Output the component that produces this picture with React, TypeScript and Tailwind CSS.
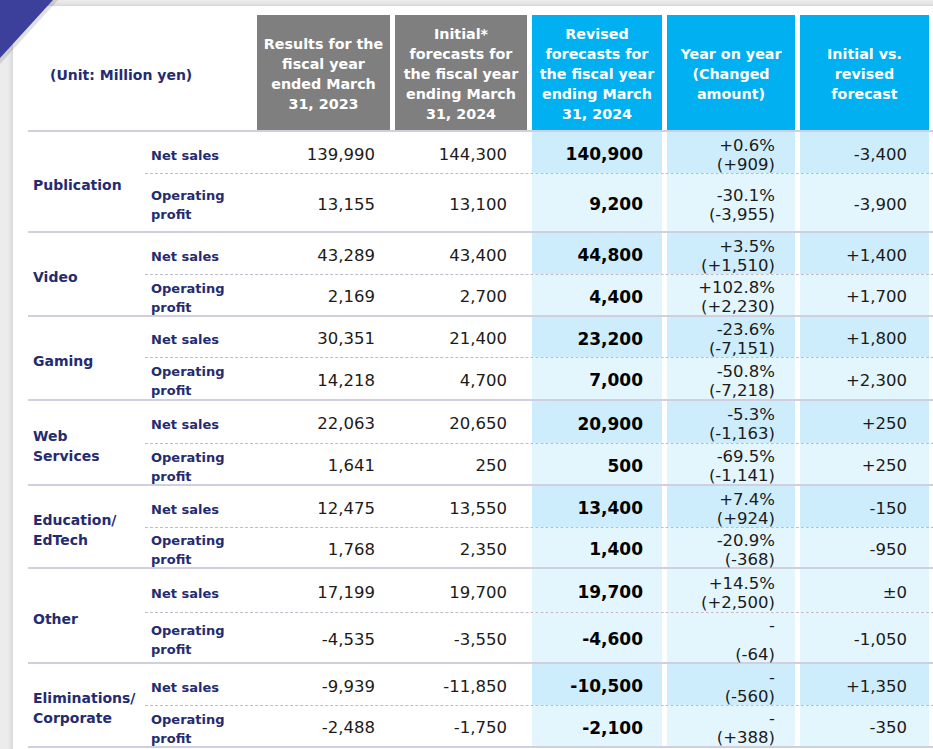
type Row = {
  label: string[];
  v: [string, string, string, string[], string];
  dark?: boolean;
  h: number;
  gap?: string;
};

type Segment = { name: string[]; rows: [Row, Row] };

const NS = ['Net sales'];
const OP = ['Operating', 'profit'];

const segments: Segment[] = [
  {
    name: ['Publication'],
    rows: [
      { label: NS, v: ['139,990', '144,300', '140,900', ['+0.6%', '(+909)'], '-3,400'], dark: true, h: 41 },
      { label: OP, v: ['13,155', '13,100', '9,200', ['-30.1%', '(-3,955)'], '-3,900'], h: 57 },
    ],
  },
  {
    name: ['Video'],
    rows: [
      { label: NS, v: ['43,289', '43,400', '44,800', ['+3.5%', '(+1,510)'], '+1,400'], dark: true, h: 41 },
      { label: OP, v: ['2,169', '2,700', '4,400', ['+102.8%', '(+2,230)'], '+1,700'], h: 40 },
    ],
  },
  {
    name: ['Gaming'],
    rows: [
      { label: NS, v: ['30,351', '21,400', '23,200', ['-23.6%', '(-7,151)'], '+1,800'], dark: true, h: 40 },
      { label: OP, v: ['14,218', '4,700', '7,000', ['-50.8%', '(-7,218)'], '+2,300'], h: 41 },
    ],
  },
  {
    name: ['Web', 'Services'],
    rows: [
      { label: NS, v: ['22,063', '20,650', '20,900', ['-5.3%', '(-1,163)'], '+250'], dark: true, h: 42 },
      { label: OP, v: ['1,641', '250', '500', ['-69.5%', '(-1,141)'], '+250'], h: 40 },
    ],
  },
  {
    name: ['Education/', 'EdTech'],
    rows: [
      { label: NS, v: ['12,475', '13,550', '13,400', ['+7.4%', '(+924)'], '-150'], dark: true, h: 41 },
      { label: OP, v: ['1,768', '2,350', '1,400', ['-20.9%', '(-368)'], '-950'], h: 39 },
    ],
  },
  {
    name: ['Other'],
    rows: [
      { label: NS, v: ['17,199', '19,700', '19,700', ['+14.5%', '(+2,500)'], '±0'], h: 43 },
      { label: OP, v: ['-4,535', '-3,550', '-4,600', ['-', '(-64)'], '-1,050'], h: 49, gap: 'gap-[10px]' },
    ],
  },
  {
    name: ['Eliminations/', 'Corporate'],
    rows: [
      { label: NS, v: ['-9,939', '-11,850', '-10,500', ['-', '(-560)'], '+1,350'], dark: true, h: 41 },
      { label: OP, v: ['-2,488', '-1,750', '-2,100', ['-', '(+388)'], '-350'], h: 40 },
    ],
  },
];

const heads = [
  { lines: ['Results for the', 'fiscal year', 'ended March', '31, 2023'], bg: 'bg-[#7f7f7f]', w: 'w-[133px]' },
  { lines: ['Initial*', 'forecasts for', 'the fiscal year', 'ending March', '31, 2024'], bg: 'bg-[#7f7f7f]', w: 'w-[132px]' },
  { lines: ['Revised', 'forecasts for', 'the fiscal year', 'ending March', '31, 2024'], bg: 'bg-[#00b0f0]', w: 'w-[130px]' },
  { lines: ['Year on year', '(Changed', 'amount)'], bg: 'bg-[#00b0f0]', w: 'w-[128px]' },
  { lines: ['Initial vs.', 'revised', 'forecast'], bg: 'bg-[#00b0f0]', w: 'w-[129px]' },
];

function DataRow({ row, last }: { row: Row; last: boolean }) {
  const blue = row.dark ? 'bg-[#cdedfc]' : 'bg-[#e3f5fd]';
  return (
    <div
      className={`flex gap-x-[5px] ${last ? '' : 'border-b border-dashed border-[#bcbcca]'}`}
      style={{ height: row.h + (last ? 0 : 1) }}
    >
      <div className="w-[107px] shrink-0 flex flex-col justify-center pl-[6px] pt-[5px] text-[13px] leading-[19px] font-bold text-[#252b6f]">
        {row.label.map((l) => (
          <span key={l}>{l}</span>
        ))}
      </div>
      <div className="w-[133px] shrink-0 flex items-center justify-end pr-[15px] pt-[5px]">{row.v[0]}</div>
      <div className="w-[132px] shrink-0 flex items-center justify-end pr-[20px] pt-[5px]">{row.v[1]}</div>
      <div className={`w-[130px] shrink-0 flex items-center justify-end pr-[19px] pt-[5px] font-bold text-black text-[17px] ${blue}`}>
        {row.v[2]}
      </div>
      <div className={`w-[128px] shrink-0 flex flex-col items-end justify-center pr-[20px] pt-[4px] leading-[19px] ${row.gap ?? ''} ${blue}`}>
        {row.v[3].map((l, i) => (
          <span key={i}>{l}</span>
        ))}
      </div>
      <div className={`w-[129px] shrink-0 flex items-center justify-end pr-[22px] pt-[5px] ${blue}`}>{row.v[4]}</div>
      <div className="w-[40px] shrink-0" />
    </div>
  );
}

export default function App() {
  return (
    <div className="relative w-[933px] h-[749px] overflow-hidden bg-[#ececec] font-['DejaVu_Sans',sans-serif]">
      <svg className="absolute left-0 top-0 z-10" width="70" height="75" viewBox="0 0 70 75">
        <polygon points="0,0 58,0 0,64" fill="#000" opacity="0.12" />
        <polygon points="0,0 53,0 0,58" fill="#3c409a" />
      </svg>
      <div className="ml-[13px] mt-[6px] w-[940px] h-[760px] bg-white shadow-[0_0_6px_rgba(0,0,0,0.18)] pl-[15px] pt-[9px]">
        <div className="flex gap-x-[5px] h-[117px] border-b-2 border-[#cfcfe0]">
          <div className="w-[224px] shrink-0 flex items-center pl-[22px] pt-[6px] text-[14px] font-bold text-[#252b6f]">
            (Unit: Million yen)
          </div>
          {heads.map((h, i) => (
            <div
              key={i}
              className={`${h.w} ${h.bg} shrink-0 flex flex-col items-center justify-center pt-[2px] text-white font-bold text-[14.3px] leading-[20px] text-center`}
            >
              {h.lines.map((l) => (
                <span key={l}>{l}</span>
              ))}
            </div>
          ))}
          <div className="w-[40px] shrink-0 bg-[#00b0f0]" />
        </div>
        <div className="text-[16.5px] text-[#1b1b1b]">
          {segments.map((s) => (
            <div key={s.name[0]} className="flex border-b-2 border-[#cfcfe0]">
              <div className="w-[117px] shrink-0 flex flex-col justify-center pl-[5px] pt-[6px] text-[14px] leading-[20px] font-bold text-[#252b6f]">
                {s.name.map((n) => (
                  <span key={n}>{n}</span>
                ))}
              </div>
              <div className="flex flex-col">
                <DataRow row={s.rows[0]} last={false} />
                <DataRow row={s.rows[1]} last />
              </div>
            </div>
          ))}
        </div>
      </div>
    </div>
  );
}
